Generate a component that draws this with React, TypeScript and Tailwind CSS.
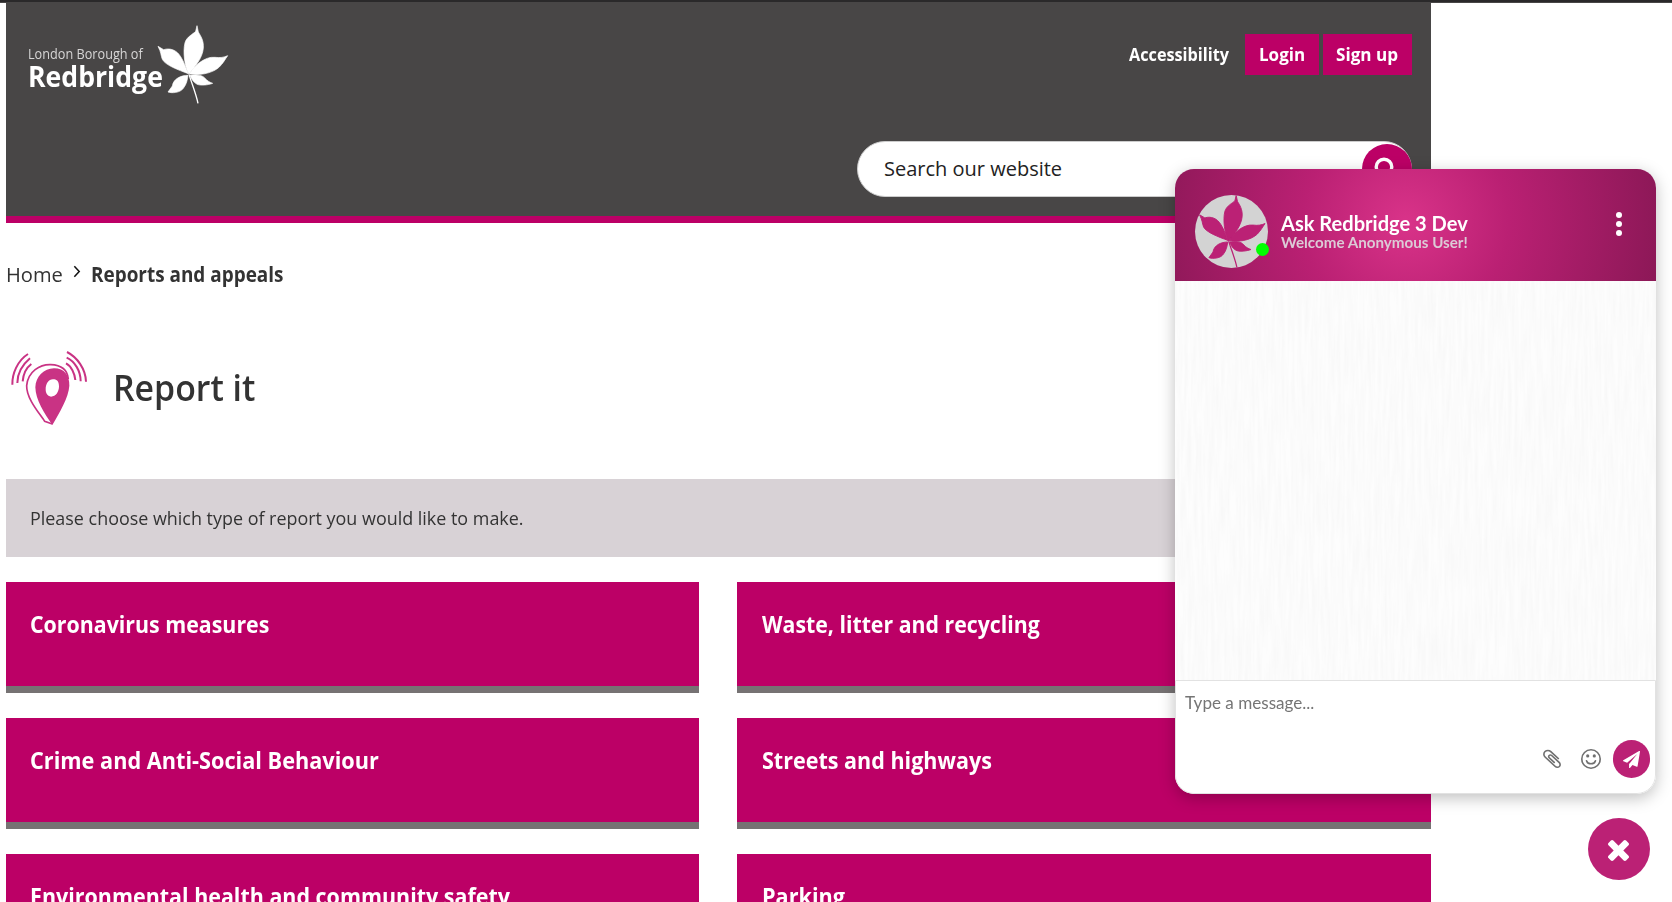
import { useLayoutEffect, useRef, useState } from "react";

/** Single line of text condensed or expanded horizontally to a given width. */
function FitText({ width, className, children }: { width: number; className?: string; children: string }) {
  const ref = useRef<HTMLSpanElement>(null);
  const [scale, setScale] = useState(1);
  useLayoutEffect(() => {
    if (ref.current) setScale(width / ref.current.offsetWidth);
  }, [width]);
  return (
    <span className="block" style={{ width }}>
      <span
        ref={ref}
        className={`inline-block origin-left align-top whitespace-nowrap ${className ?? ""}`}
        style={{ transform: `scaleX(${scale})` }}
      >
        {children}
      </span>
    </span>
  );
}

function LeafShape() {
  return (
    <g fill="currentColor">
      <path d="M117 163C104 140 98 95 105 68C110 50 130 42 137 34L141 17L145 36C152 48 162 62 160 85C157 115 135 140 117 163Z" />
      <path d="M115 161C85 150 45 135 37 118C32 105 34 98 24 79L41 89C60 83 80 90 92 110C102 125 108 145 115 161Z" />
      <path d="M120 160C135 135 165 109 195 112C210 114 222 112 233 107C224 120 222 125 215 133C200 155 160 168 120 162Z" />
      <path d="M114 166C95 166 70 175 67 198L54 216C65 220 90 219 100 205C110 192 112 180 114 166Z" />
      <path d="M120 166C135 165 155 162 165 175C172 183 180 187 188 190C175 195 150 198 140 192C130 187 124 176 120 166Z" />
      <path d="M117 163C125 190 138 220 144 250" fill="none" stroke="currentColor" strokeWidth="4" />
    </g>
  );
}

function Logo() {
  return (
    <div className="flex text-white">
      <div className="-ml-px flex w-[130px] flex-col gap-1 pt-[42px] leading-4">
        <FitText width={115} className="text-[15px] leading-4 text-[#d6d5d5]">London Borough of</FitText>
        <FitText width={135} className="text-[29px] leading-[22px] font-bold">Redbridge</FitText>
      </div>
      <svg viewBox="0 0 252 270" className="mt-[17px] -ml-2 h-[90px] w-[84px]" stroke="currentColor" strokeWidth="2">
        <LeafShape />
      </svg>
    </div>
  );
}

function ReportIcon() {
  return (
    <svg viewBox="0 0 270 270" className="h-[90px] w-[90px] text-[#c93384]" fill="none" stroke="currentColor" strokeWidth="6">
      <path d="M145 240L122 232C110 212 67 165 68 125C72 82 108 61 140 62C168 63 190 74 193 105" strokeWidth="5" />
      <path
        d="M145 243C120 207 95 167 94 130C95 98 120 73 150 73C182 73 197 95 196 125C194 160 166 207 145 243Z M151 106C135 103 125 118 125 136C125 150 132 157 141 158C156 158 165 143 165 127C165 115 160 107 151 106Z"
        fill="currentColor"
        stroke="none"
        fillRule="evenodd"
      />
      <path d="M25 122C24 90 40 50 72 30M40 117C40 90 52 65 78 43M56 112C58 90 66 72 82 60" />
      <path d="M189 24C220 40 245 75 246 113M188 41C212 52 230 80 230 112M186 58C202 66 212 88 214 108" />
    </svg>
  );
}

function Header() {
  return (
    <header className="flex h-[220px] justify-between border-b-[7px] border-[#bc0066] bg-[#484646] pr-[19px] pl-[23px]">
      <Logo />
      <div className="flex w-[555px] flex-col">
        <nav className="mt-[31px] flex h-[41px] items-center justify-end text-[18.500px] leading-[26px] font-bold text-white">
          <a className="pb-[2px]">
            <FitText width={100}>Accessibility</FitText>
          </a>
          <a className="ml-[16px] flex h-full w-[74px] items-center justify-center bg-[#bc0066] pr-px pb-[2px]">
            <FitText width={46}>Login</FitText>
          </a>
          <a className="ml-1 flex h-full w-[89px] items-center justify-center bg-[#bc0066] pr-px pb-[2px]">
            <FitText width={62}>Sign up</FitText>
          </a>
        </nav>
        <div className="mt-[66px] flex h-[56px] items-center justify-between rounded-full border border-[#ccc] bg-white pl-[26px] text-[20px] text-[#222]">
          <FitText width={178}>Search our website</FitText>
          <div className="-mr-px flex h-[50px] w-[50px] items-center justify-center rounded-full bg-[#bc0066]">
            <svg viewBox="0 0 24 24" className="mr-1.5 h-6 w-6" fill="none" stroke="white" strokeWidth="3.4">
              <circle cx="12" cy="10" r="7.8" />
              <path d="M17 16l5 6" />
            </svg>
          </div>
        </div>
      </div>
    </header>
  );
}

const cards: [string, number][] = [
  ["Coronavirus measures", 239],
  ["Waste, litter and recycling", 278],
  ["Crime and Anti-Social Behaviour", 349],
  ["Streets and highways", 230],
  ["Environmental health and community safety", 480],
  ["Parking", 83],
];

function ChatPanel() {
  return (
    <section className="absolute top-[169px] left-[1175px] flex h-[625px] w-[481px] flex-col overflow-hidden rounded-[19px] bg-white font-['Lato',sans-serif] shadow-[0_4px_16px_rgba(0,0,0,0.25)]">
      <div className="flex h-[112px] shrink-0 items-center bg-[radial-gradient(circle_at_48%_47%,#d93389,#ba2073_40%,#8c1857)] pr-[34px] pl-[20px]">
        <div className="relative mt-[12px] h-[73px] w-[73px]">
          <svg viewBox="0 0 219 219" className="h-full w-full rounded-full bg-[#d3d3d3] text-[#bb2175]" stroke="currentColor" strokeWidth="3">
            <g transform="translate(-9 -15) scale(.94)">
              <LeafShape />
            </g>
          </svg>
          <span className="absolute top-[48px] left-[61px] h-[13px] w-[13px] rounded-full bg-[#00ff00]" />
        </div>
        <div className="ml-[13px] grow pt-[23px] font-bold">
          <FitText width={187} className="text-[20.500px] leading-[20px] text-white">Ask Redbridge 3 Dev</FitText>
          <FitText width={187} className="text-[15px] leading-[11px] text-[#dccbd6]">Welcome Anonymous User!</FitText>
        </div>
        <div className="-mt-[2px] flex flex-col gap-[2.6px]">
          <i className="h-[6px] w-[6px] rounded-full bg-white" />
          <i className="h-[6px] w-[6px] rounded-full bg-white" />
          <i className="h-[6px] w-[6px] rounded-full bg-white" />
        </div>
      </div>
      <div className="h-[399px] bg-[#fdfdfd]">
        <svg width="481" height="399" className="block">
          <filter id="grain" x="0" y="0" width="100%" height="100%">
            <feTurbulence type="fractalNoise" baseFrequency="0.3 0.02" numOctaves="2" seed="4" />
            <feColorMatrix values="0 0 0 0 0  0 0 0 0 0  0 0 0 0 0  0.035 0 0 0 -0.01" />
          </filter>
          <rect width="481" height="399" filter="url(#grain)" />
        </svg>
      </div>
      <div className="flex h-[114px] shrink-0 flex-col justify-between rounded-b-[19px] border border-[#e2e2e2] bg-white">
        <div className="pt-[10px] pl-[9px]">
          <FitText width={129} className="text-[18px] leading-[22px] text-[#757575]">Type a message...</FitText>
        </div>
        <div className="flex items-center justify-end pr-[5px] pb-[15px] text-[#707070]">
          <svg viewBox="0 0 1408 1536" className="mr-[20px] mb-[2px] h-[20px] w-[18px]" fill="currentColor">
            <path transform="scale(1 .93)" d="M1404 1385q0 117-79 196t-196 79q-135 0-235-100l-777-776q-113-115-113-271 0-159 110-270t269-111q158 0 273 113l605 606q10 10 10 22 0 16-30.500 46.500t-46.500 30.500q-13 0-23-10l-606-607q-79-77-181-77-106 0-179 75t-73 181q0 105 76 181l776 777q63 63 145 63 64 0 106-42t42-106q0-82-63-145l-581-581q-26-24-60-24-29 0-48 19t-19 48q0 32 25 59l410 410q10 10 10 22 0 16-31 47t-47 31q-12 0-22-10l-410-410q-63-61-63-149 0-82 57-139t139-57q88 0 149 63l581 581q100 98 100 235z" />
          </svg>
          <svg viewBox="0 0 20 20" className="mr-[12px] mb-px h-5 w-5" fill="none" stroke="currentColor" strokeWidth="1.6">
            <circle cx="10" cy="10" r="9.200" />
            <path d="M5.500 11.800C6.500 15.800 13.500 15.800 14.500 11.800" strokeLinecap="round" />
            <circle cx="6.700" cy="6.900" r="1.600" fill="currentColor" stroke="none" />
            <circle cx="13.300" cy="6.900" r="1.600" fill="currentColor" stroke="none" />
          </svg>
          <div className="flex h-[38px] w-[37px] items-center justify-center rounded-full bg-[#bb2175]">
            <svg viewBox="0 0 1792 1792" className="h-[17px] w-[17px]" fill="white">
              <path d="M1764 11q33 24 27 64l-256 1536q-5 29-32 45-14 8-31 8-11 0-24-5l-453-185-242 295q-18 23-49 23-13 0-22-4-19-7-30.500-23.500t-11.500-36.500v-349l864-1059-1069 925-395-162q-37-14-40-55-2-40 32-59l1664-960q15-9 32-9 20 0 36 11z" />
            </svg>
          </div>
        </div>
      </div>
    </section>
  );
}

export default function App() {
  return (
    <div className="relative h-[902px] w-[1672px] overflow-hidden bg-white font-['Open_Sans',sans-serif] text-[#333]">
      <div className="h-[3px] border-b border-[#484646] bg-[#2a292a]" />
      <div className="ml-[6px] w-[1425px]">
        <Header />
        <div className="flex h-[103px] items-center text-[20.500px]">
          <FitText width={57}>Home</FitText>
          <svg viewBox="0 0 9 14" className="mr-[10px] mb-[6px] ml-[10px] h-[13px] w-[8px]" fill="none" stroke="#111" strokeWidth="1.7">
            <path d="M1.500 1l5.500 6-5.500 6" />
          </svg>
          <FitText width={192} className="font-bold">Reports and appeals</FitText>
        </div>
        <div className="mt-[18px] -ml-[2px] flex items-center">
          <ReportIcon />
          <h1 className="-mt-[2px] ml-[19px] text-[35.500px] font-semibold">
            <FitText width={142}>Report it</FitText>
          </h1>
        </div>
        <div className="mt-[45px] flex h-[78px] items-center bg-[#d8d2d6] pl-[24px] text-[18.500px]">
          <FitText width={494}>Please choose which type of report you would like to make.</FitText>
        </div>
        <div className="mt-[25px] grid grid-cols-[693px_694px] gap-x-[38px] gap-y-[25px]">
          {cards.map(([label, width]) => (
            <a key={label} className="block h-[111px] border-b-[7px] border-[#767273] bg-[#bc0066] pt-[26px] pl-[24px] text-[23.500px] leading-8 font-bold text-white even:pl-[25px]">
              <FitText width={width}>{label}</FitText>
            </a>
          ))}
        </div>
      </div>
      <ChatPanel />
      <button className="absolute top-[818px] left-[1588px] flex h-[62px] w-[62px] items-center justify-center rounded-full bg-[#bb2175]">
        <svg viewBox="302 302 1188 1188" className="mt-[3px] ml-[-1px] h-[21px] w-[21px]" fill="white">
          <path d="M1490 1322q0 40-28 68l-136 136q-28 28-68 28t-68-28l-294-294-294 294q-28 28-68 28t-68-28l-136-136q-28-28-28-68t28-68l294-294-294-294q-28-28-28-68t28-68l136-136q28-28 68-28t68 28l294 294 294-294q28-28 68-28t68 28l136 136q28 28 28 68t-28 68l-294 294 294 294q28 28 28 68z" transform="translate(0 -64)" />
        </svg>
      </button>
    </div>
  );
}
